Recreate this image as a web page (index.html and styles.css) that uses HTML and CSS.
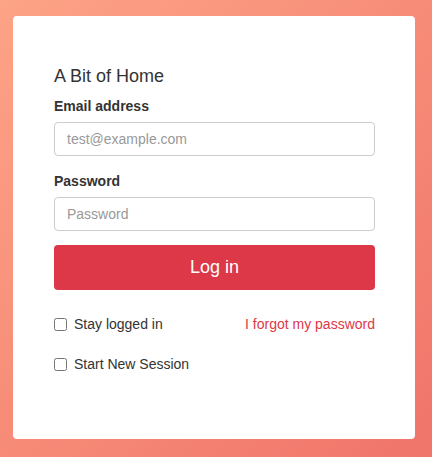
FILE: index.html
```html
<!DOCTYPE html>
<html lang="en">

<head>
    <meta charset="UTF-8">
    <meta name="viewport" content="width=device-width, initial-scale=1.0">
    <title>A Bit of Home</title>
    <link rel="stylesheet" href="styles.css">
</head>

<body>
    <div class="card">
        <h1 class="title">A Bit of Home</h1>
        <form class="login-form">
            <label for="email" class="field-label">Email address</label>
            <input type="text" id="email" placeholder="test@example.com">

            <label for="password" class="field-label">Password</label>
            <input type="password" id="password" placeholder="Password">

            <button type="button" class="login-button">Log in</button>

            <div class="option-row">
                <label class="check"><input type="checkbox"> Stay logged in</label>
                <a href="#" class="forgot-link">I forgot my password</a>
            </div>
            <div class="option-row second">
                <label class="check"><input type="checkbox"> Start New Session</label>
            </div>
        </form>
    </div>
</body>

</html>
```

FILE: styles.css
```css
html,
body {
    height: 100%;
}

body {
    font-family: "Liberation Sans", Arial, sans-serif;
    background: linear-gradient(135deg, #fda386 0%, #f0746a 100%);
    margin: 0;
    padding: 16px 17px 18px 13px;
    box-sizing: border-box;
    color: #333;
}

.card {
    background: #fff;
    border-radius: 4px;
    height: 100%;
    box-sizing: border-box;
    padding: 49px 40px 0 41px;
}

.title {
    font-size: 18px;
    font-weight: normal;
    line-height: 22px;
    margin: 0 0 9px;
}

.login-form {
    display: flex;
    flex-direction: column;
}

.field-label {
    font-size: 14px;
    font-weight: bold;
    line-height: 20px;
    margin-bottom: 6px;
}

input[type="text"],
input[type="password"] {
    height: 34px;
    box-sizing: border-box;
    border: 1px solid #ccc;
    border-radius: 4px;
    padding: 0 12px;
    font-family: inherit;
    font-size: 14px;
    color: #555;
    margin-bottom: 15px;
}

input::placeholder {
    color: #999;
}

#password {
    margin-bottom: 14px;
}

.login-button {
    height: 45px;
    background-color: #dc3848;
    color: #fff;
    border: none;
    border-radius: 4px;
    font-family: inherit;
    font-size: 18px;
    cursor: pointer;
    margin-bottom: 24px;
}

.option-row {
    display: flex;
    justify-content: space-between;
    align-items: center;
    font-size: 14px;
    line-height: 20px;
}

.option-row.second {
    margin-top: 20px;
}

.check {
    display: flex;
    align-items: center;
}

.check input {
    width: 13px;
    height: 13px;
    margin: 0 7px 0 0;
}

.forgot-link {
    color: #dc3848;
    text-decoration: none;
}
```
